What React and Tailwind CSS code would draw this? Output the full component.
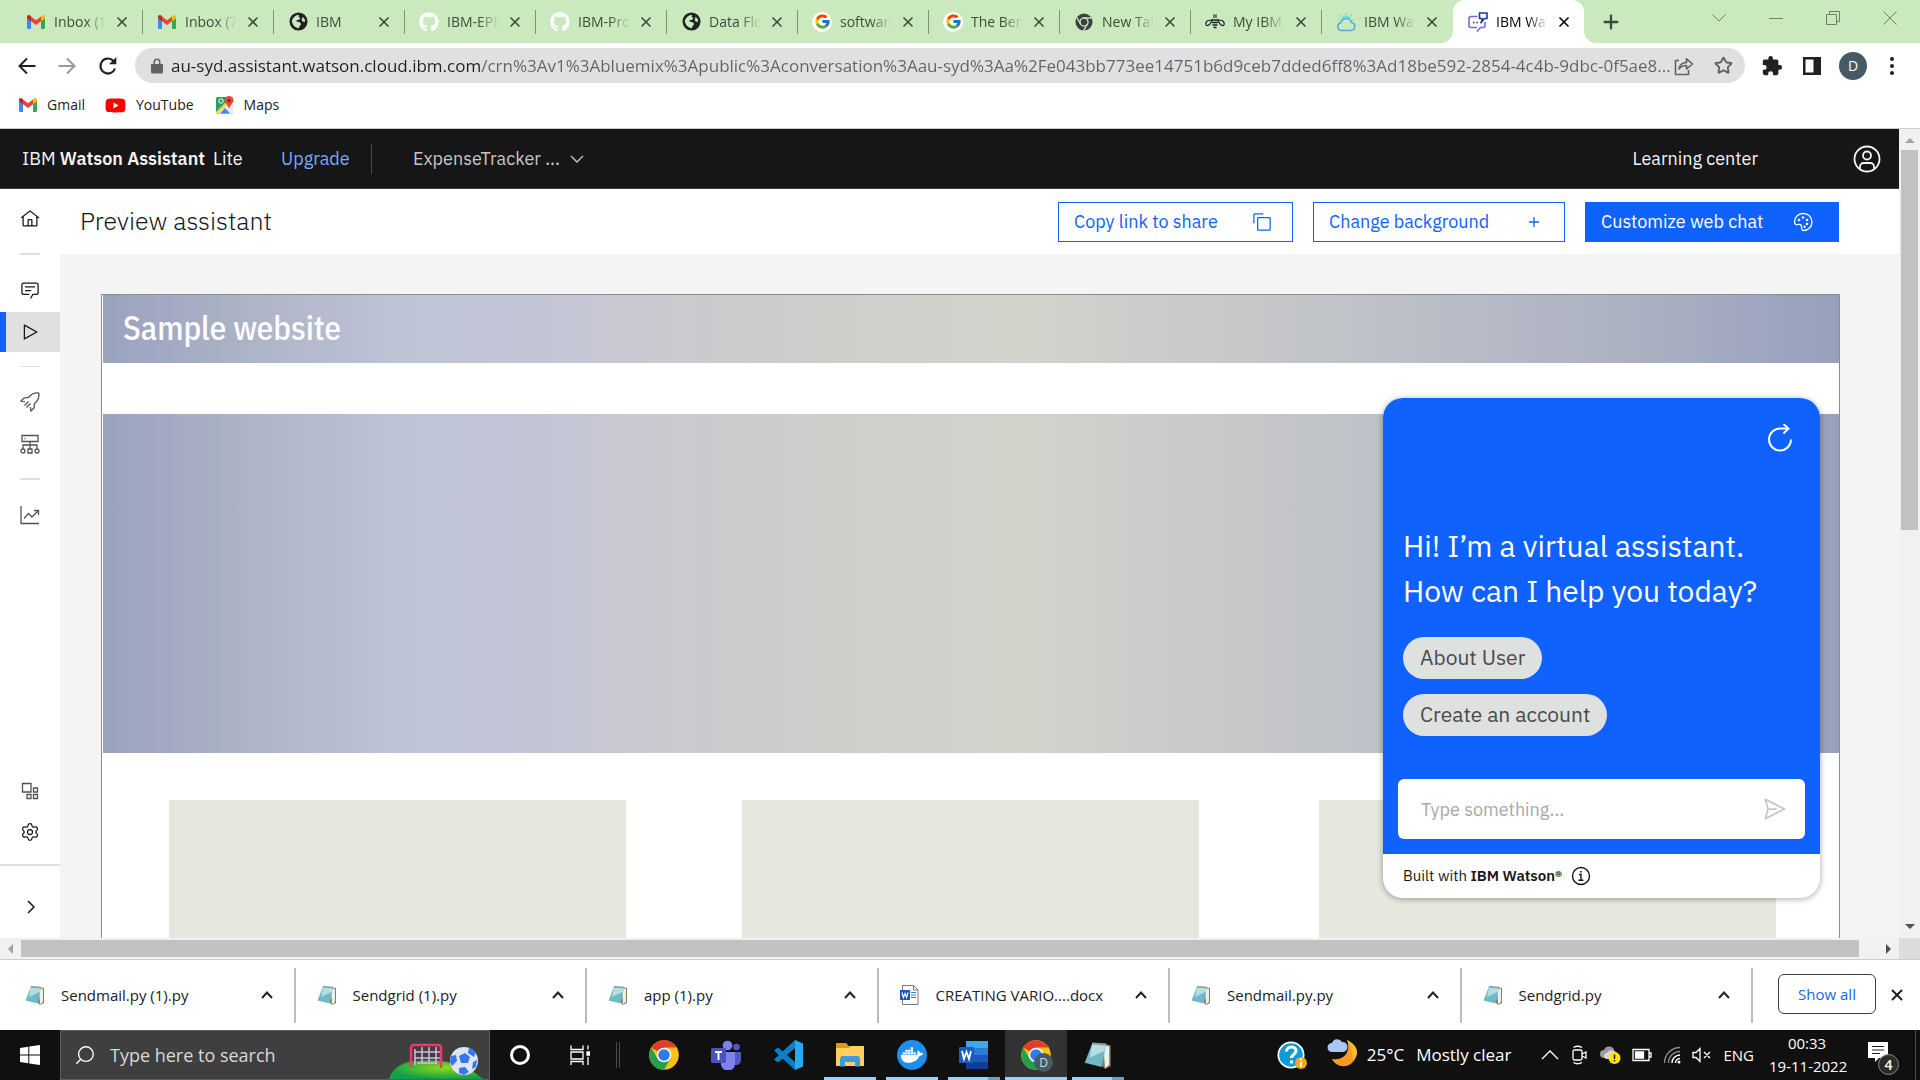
import React from "react";
import { FcGoogle } from "react-icons/fc";
import { FaGithub, FaYoutube, FaDocker } from "react-icons/fa";
import { Settings, X, Plus, Star, Search } from "lucide-react";

const UI = "font-['Segoe_UI','Open_Sans',sans-serif]";
const PLEX = "font-['IBM_Plex_Sans',Roboto,sans-serif]";

function Gmail({ className = "w-[18px] h-[14px]" }) {
  return (
    <svg viewBox="0 0 18 14" className={className} aria-hidden="true">
      <path d="M0 3v9.800a1.200 1.200 0 0 0 1.200 1.200H4V5z" fill="#4285f4" />
      <path d="M14 5v9h2.800a1.200 1.200 0 0 0 1.200-1.200V3z" fill="#34a853" />
      <path d="M14 1.500V6.300l4-3V2c0-1.900-2-2.500-3.200-1.600z" fill="#fbbc04" />
      <path d="M4 6.300V1.400l5 3.800 5-3.800v4.900L9 10z" fill="#ea4335" />
      <path d="M0 2v1.300l4 3V1.400L3.200.4C2-.5 0 .1 0 2z" fill="#c5221f" />
    </svg>
  );
}

function Globe() {
  return (
    <svg viewBox="0 0 20 20" className="size-[19px]" aria-hidden="true">
      <circle cx="10" cy="10" r="9.500" fill="#202124" />
      <path d="M3 9c1.500-3.500 4-5.500 7.500-6-.5 1.500-.5 2.500 1 3 1 .5 0 2-2 2.300C8 8.600 7 9 8 10c2 .5 4.500.5 4.500 2.500 0 1.500-1.500 1.500-2 4.500-4-.2-7-3-7.500-8zM14 5c2 1 3 3 3 5-1.500.6-2.800.2-3.500-1-.6-1.200 1-2 .5-4z" fill="#cbe9bf" />
    </svg>
  );
}

function GoogleBadge() {
  return (
    <span className="flex size-5 items-center justify-center rounded-full bg-white">
      <FcGoogle className="size-[17px]" />
    </span>
  );
}

function ChromeMono() {
  return (
    <svg viewBox="0 0 20 20" className="size-[18px]" aria-hidden="true">
      <circle cx="10" cy="10" r="9.500" fill="#3c4043" />
      <circle cx="10" cy="10" r="4.500" fill="none" stroke="#cbe9bf" strokeWidth="1.500" />
      <path d="M10 5.500h8.500M6.200 12.200L2 5M13.800 12.200L9.600 19.500" stroke="#cbe9bf" strokeWidth="1.500" />
    </svg>
  );
}

function Bee() {
  return (
    <svg viewBox="0 0 20 16" className="w-5 h-4" fill="none" stroke="#202124" strokeWidth="1.200" aria-hidden="true">
      <path d="M8.500.5l1 1.500M11.500.5l-1 1.500M8 3h4" />
      <path d="M6.500 6h7M7 8.500h6M7.500 11h5M8.500 13.500h3" strokeWidth="1.600" />
      <path d="M7 6L3 6.500C.5 8 .3 10 1.500 11.500 3.500 12 5.500 10 7 6zM13 6l4 .5c2.500 1.500 2.700 3.500 1.500 5-2 .5-4-1.500-5.500-5.500z" />
    </svg>
  );
}

function CloudSun() {
  return (
    <svg viewBox="0 0 20 20" className="size-5" fill="none" strokeWidth="1.500" aria-hidden="true">
      <path d="M5.500 18.500h9.500a4 4 0 0 0 .6-7.900A5.500 5.500 0 0 0 5 10.600a4 4 0 0 0 .5 7.900z" stroke="#4fa9d8" />
      <path d="M6 7a4.500 4.500 0 0 1 8.500 1M10 1v1.700M4.500 3l1.200 1.200M15.500 3l-1.200 1.200M2.500 7.500h1.500M16.500 8h1.500" stroke="#5fe0d8" />
    </svg>
  );
}

function WatsonIcon() {
  return (
    <svg viewBox="0 0 20 20" className="size-5" fill="none" strokeWidth="1.600" aria-hidden="true">
      <path d="M9.500 4.500H3A2 2 0 0 0 1 6.500v7a2 2 0 0 0 2 2h6M17 10v3.500a2 2 0 0 1-2 2h-2.500L9 19.500" stroke="#7b61f5" />
      <path d="M11.500 1h7.500v5.500h-2.500L14 9.500v-3h-2.500z" stroke="#1f3a93" />
      <path d="M5 10.500h1.500M8.500 10.500H10M12 10.500h1.500" stroke="#2b2f77" />
    </svg>
  );
}

const tabs = [
  ["Inbox (1)", <Gmail />],
  ["Inbox (7)", <Gmail />],
  ["IBM", <Globe />],
  ["IBM-EPBL", <FaGithub className="size-5 text-white" />],
  ["IBM-Project", <FaGithub className="size-5 text-white" />],
  ["Data Flow", <Globe />],
  ["software", <GoogleBadge />],
  ["The Benefits", <GoogleBadge />],
  ["New Tab", <ChromeMono />],
  ["My IBM", <Bee />],
  ["IBM Watson", <CloudSun />],
];

function Tab({ title, icon, active }) {
  return (
    <div
      className={
        active
          ? "relative flex h-[43px] w-[131px] shrink-0 items-center rounded-t-xl bg-white pl-[15px] text-black before:absolute before:bottom-0 before:-left-3 before:size-3 before:bg-[radial-gradient(circle_at_0_0,transparent_12px,white_12px)] after:absolute after:bottom-0 after:-right-3 after:size-3 after:bg-[radial-gradient(circle_at_100%_0,transparent_12px,white_12px)]"
          : "flex h-6 w-[131px] shrink-0 items-center border-r border-[#7f9277] pl-[14px] text-[#3f4a3b] last:border-transparent"
      }
    >
      <button type="button" className="flex min-w-0 items-center">
        <span className="flex w-5 shrink-0 justify-center">{icon}</span>
        <span className="ml-2 w-[52px] overflow-hidden whitespace-nowrap text-left text-sm [mask-image:linear-gradient(90deg,#000_60%,transparent)]">
          {title}
        </span>
      </button>
      <button type="button" aria-label={"Close " + title} className="ml-2">
        <X className="size-4" strokeWidth={2.5} />
      </button>
    </div>
  );
}

function TabStrip() {
  return (
    <div className="flex h-[43px] items-center bg-[#cbe9bf] pl-3">
      <div className="flex">
        {tabs.map(([t, i], n) => (
          <Tab key={n} title={t} icon={i} />
        ))}
      </div>
      <Tab title="IBM Watson Assistant" icon={<WatsonIcon />} active />
      <button type="button" aria-label="New tab" className="ml-4 text-[#3f4a3b]">
        <Plus className="size-[22px]" strokeWidth={2.5} />
      </button>
      <div className="ml-auto flex h-9 items-center gap-[41px] self-start pr-[22px] text-[#6f7f69]">
        <button type="button" aria-label="Search tabs">
          <svg viewBox="0 0 16 16" className="size-4" fill="none" stroke="currentColor"><path d="M1.500 4.500L8 11l6.500-6.500" /></svg>
        </button>
        <button type="button" aria-label="Minimize">
          <svg viewBox="0 0 16 16" className="size-4" fill="none" stroke="currentColor"><path d="M1 8.500h14" /></svg>
        </button>
        <button type="button" aria-label="Restore">
          <svg viewBox="0 0 16 16" className="size-4" fill="none" stroke="currentColor"><path d="M1.500 4.500h10v10h-10zM4.500 4V1.500h10v10H12" /></svg>
        </button>
        <button type="button" aria-label="Close window">
          <svg viewBox="0 0 16 16" className="size-4" fill="none" stroke="currentColor"><path d="M1.500 1.500l13 13M14.500 1.500l-13 13" /></svg>
        </button>
      </div>
    </div>
  );
}

function Toolbar() {
  return (
    <div className="flex h-[45px] items-center bg-white pl-[18px] pr-5 text-[#202124]">
      <button type="button" aria-label="Back" className="mr-[22px]">
        <svg viewBox="0 0 18 18" className="size-[18px]" fill="none" stroke="currentColor" strokeWidth="2"><path d="M17.500 9H2M9 1.500L1.500 9 9 16.500" /></svg>
      </button>
      <button type="button" aria-label="Forward" className="mr-[22px] text-[#9a9a9a]">
        <svg viewBox="0 0 18 18" className="size-[18px]" fill="none" stroke="currentColor" strokeWidth="2"><path d="M.5 9H16M9 1.500L16.500 9 9 16.500" /></svg>
      </button>
      <button type="button" aria-label="Reload" className="mr-[17px]">
        <svg viewBox="0 0 20 20" className="size-5" fill="none" stroke="currentColor" strokeWidth="2.200"><path d="M17 12.500A7.500 7.500 0 1 1 15.500 5" /><path d="M18.300 1v7.300H11z" fill="currentColor" stroke="none" /></svg>
      </button>
      <form className="flex h-[35px] flex-1 items-center rounded-full bg-[#e0e0e0] pl-4 pr-3 text-[#5f6368]">
        <svg viewBox="0 0 12 16" className="h-4 w-3" aria-hidden="true">
          <path d="M1.500 6H2.500V4a3.500 3.500 0 0 1 7 0v2h1A1.200 1.200 0 0 1 12 7.200v7A1.300 1.300 0 0 1 10.700 15.500H1.300A1.300 1.300 0 0 1 0 14.200v-7A1.200 1.200 0 0 1 1.500 6zM4 6h4V4a2 2 0 0 0-4 0z" fill="currentColor" />
        </svg>
        <input
          aria-label="Address"
          defaultValue="au-syd.assistant.watson.cloud.ibm.com/crn%3Av1%3Abluemix%3Apublic%3Aconversation%3Aau-syd%3Aa%2Fe043bb773ee14751b6d9ceb7dded6ff8%3Ad18be592-2854-4c4b-9dbc-0f5ae8..."
          className="ml-2 min-w-0 flex-1 bg-transparent bg-[linear-gradient(90deg,#202124_311px,#5f6368_311px)] bg-clip-text text-[17px] text-transparent outline-none"
        />
        <button type="button" aria-label="Share">
          <svg viewBox="0 0 20 20" className="size-5" fill="none" stroke="currentColor" strokeWidth="1.600"><path d="M5 4.500H1.500v14h13V14M5 13c.6-4.200 3.200-6.400 7.500-6.500V2.800L18.500 8l-6 5V9.500C9.500 9.500 7 10.500 5 13z" strokeLinejoin="round" /></svg>
        </button>
        <button type="button" aria-label="Bookmark" className="ml-5">
          <Star className="size-[19px]" strokeWidth={2.4} strokeLinejoin="miter" />
        </button>
      </form>
      <button type="button" aria-label="Extensions" className="ml-4">
        <svg viewBox="0 0 24 24" className="size-[22px]" fill="currentColor"><path d="M20.500 11H19V7a2 2 0 0 0-2-2h-4V3.500a2.500 2.500 0 0 0-5 0V5H4a2 2 0 0 0-2 2v3.800h1.500a2.700 2.700 0 0 1 0 5.400H2V20a2 2 0 0 0 2 2h3.800v-1.500a2.700 2.700 0 0 1 5.400 0V22H17a2 2 0 0 0 2-2v-4h1.500a2.500 2.500 0 0 0 0-5z" /></svg>
      </button>
      <button type="button" aria-label="Side panel" className="ml-5">
        <svg viewBox="0 0 18 18" className="size-[18px]"><path d="M0 0h18v18H0z M2.500 2.500v13h8v-13z" fill="currentColor" fillRule="evenodd" /></svg>
      </button>
      <button type="button" aria-label="Profile" className="ml-[18px] flex size-7 items-center justify-center rounded-full bg-[#455a64] text-sm text-white">D</button>
      <button type="button" aria-label="Menu" className="ml-[17px]">
        <svg viewBox="0 0 16 20" className="h-5 w-4" fill="currentColor"><circle cx="8" cy="3" r="2" /><circle cx="8" cy="10" r="2" /><circle cx="8" cy="17" r="2" /></svg>
      </button>
    </div>
  );
}

function Bookmarks() {
  return (
    <nav className="flex h-[41px] items-center border-b border-[#cccccc] bg-white pl-[19px] pb-[6px] text-sm text-[#202124]">
      <a href="#gmail" className="flex items-center gap-[10px]"><Gmail /> Gmail</a>
      <a href="#youtube" className="ml-5 flex items-center gap-[10px]"><FaYoutube className="size-[21px] text-[#f00]" /> YouTube</a>
      <a href="#maps" className="ml-[22px] flex items-center gap-[10px]">
        <svg viewBox="0 0 18 18" className="size-[18px]" aria-hidden="true">
          <rect y="1" width="17" height="16.500" rx="1.500" fill="#1fa463" />
          <path d="M1 17.500L17 2v15.500z" fill="#e8eaed" /><path d="M0 16L14 2l2 2L2.500 17.500H0z" fill="#fcd34d" /><path d="M4 17.500L9 12l5 5.500z" fill="#4285f4" />
          <path d="M13 0a4.500 4.500 0 0 1 4.500 4.500C17.500 7 14 8.500 13 13c-1-4.500-4.500-6-4.500-8.500A4.500 4.500 0 0 1 13 0z" fill="#e8453c" /><circle cx="13" cy="4.500" r="1.500" fill="#8c1d18" />
          <circle cx="5" cy="5" r="2.200" fill="none" stroke="#fff" />
        </svg>
        Maps
      </a>
    </nav>
  );
}

function AppHeader() {
  return (
    <header className="flex h-[60px] shrink-0 items-center border-b border-[#393939] bg-[#161616] pl-[22px] pr-[18px] text-[18px] text-[#f4f4f4]">
      <span className="w-[181px] whitespace-nowrap">IBM <b className="font-semibold">Watson Assistant</b></span>
      <span className="ml-[10px] w-[68px]">Lite</span>
      <a href="#upgrade" className="w-[90px] text-[#78a9ff]">Upgrade</a>
      <span className="h-[30px] w-px bg-[#4a4a4a]" />
      <button type="button" className="ml-[41px] flex items-center gap-[10px] text-[#c6c6c6]">
        ExpenseTracker ...
        <svg viewBox="0 0 14 10" className="h-[10px] w-[14px]" fill="none" stroke="currentColor" strokeWidth="1.400"><path d="M1 2l6 6 6-6" /></svg>
      </button>
      <a href="#learn" className="ml-auto">Learning center</a>
      <button type="button" aria-label="Account" className="ml-[95px]">
        <svg viewBox="0 0 28 28" className="size-7" fill="none" stroke="currentColor" strokeWidth="1.800"><circle cx="14" cy="14" r="12.500" /><circle cx="14" cy="10.500" r="4" /><path d="M7 24v-2.500a3.500 3.500 0 0 1 3.500-3.500h7a3.500 3.500 0 0 1 3.500 3.500V24" /></svg>
      </button>
    </header>
  );
}

function Side({ label, children, className = "h-[42px] text-[#525252]" }) {
  return (
    <button type="button" aria-label={label} className={"flex w-full shrink-0 items-center justify-center " + className}>
      {children}
    </button>
  );
}

function Sidebar() {
  return (
    <nav className="flex w-[60px] shrink-0 flex-col items-center bg-white pt-[9px]">
      <Side label="Home" className="h-[42px] text-[#161616]">
        <svg viewBox="0 0 32 32" className="size-5" fill="currentColor"><path d="M16.612 2.214a1.010 1.010 0 0 0-1.243 0L1 13.419l1.243 1.572L4 13.621V26a2.004 2.004 0 0 0 2 2h20a2.004 2.004 0 0 0 2-2V13.630L29.757 15 31 13.428zM18 26h-4v-8h4zm2 0v-8a2.002 2.002 0 0 0-2-2h-4a2.002 2.002 0 0 0-2 2v8H6V12.062l10-7.790 10 7.800V26z" /></svg>
      </Side>
      <hr className="my-[13px] h-[2px] w-5 border-0 bg-[#e0e0e0]" />
      <Side label="Actions" className="h-11 text-[#161616]">
        <svg viewBox="0 0 32 32" className="size-5" fill="currentColor"><path d="M17.740 30L16 29l4-7h6a2 2 0 0 0 2-2V8a2 2 0 0 0-2-2H6a2 2 0 0 0-2 2v12a2 2 0 0 0 2 2h9v2H6a4 4 0 0 1-4-4V8a4 4 0 0 1 4-4h20a4 4 0 0 1 4 4v12a4 4 0 0 1-4 4h-4.840z" /><path d="M8 10h16v2H8zM8 16h10v2H8z" /></svg>
      </Side>
      <Side label="Preview" className="h-10 border-l-[6px] border-[#0f62fe] bg-[#e0e0e0] pr-[6px] text-[#161616]">
        <svg viewBox="0 0 32 32" className="size-5" fill="currentColor"><path d="M7 28a1 1 0 0 1-1-1V5a1 1 0 0 1 1.482-.876l20 11a1 1 0 0 1 0 1.752l-20 11A1 1 0 0 1 7 28zM8 6.691v18.618L24.925 16z" /></svg>
      </Side>
      <hr className="my-[14px] h-px w-5 border-0 bg-[#e0e0e0]" />
      <Side label="Publish">
        <svg viewBox="0 0 20 20" className="size-5" fill="none" stroke="currentColor" strokeWidth="1.300"><path d="M19 1c-5-.3-8 1-10.500 4.500L4 6 1 9l4 .7M19 1c.3 5-1 8-4.500 10.500L14 16l-3 3-.7-4M8.500 9.500l-4 4M10.500 11.500l-4 4" /></svg>
      </Side>
      <Side label="Environments">
        <svg viewBox="0 0 20 20" className="size-5" fill="none" stroke="currentColor" strokeWidth="1.300"><path d="M2 1.500h16v6H2zM10 7.500V15M3 15v-4h14v4M8 15h4v4H8zM4.500 4.500h1" /><circle cx="3" cy="17" r="2" /><circle cx="17" cy="17" r="2" /></svg>
      </Side>
      <hr className="my-[13px] h-[2px] w-5 border-0 bg-[#e0e0e0]" />
      <Side label="Analyze" className="h-11 text-[#525252]">
        <svg viewBox="0 0 20 20" className="size-5" fill="none" stroke="currentColor" strokeWidth="1.300"><path d="M1 1v17.500h18M4 13.500l4.500-5 3.500 3.500 6.500-6.500M14 5.500h4.500V10" /></svg>
      </Side>
      <div className="mt-auto w-full">
        <Side label="Integrations">
          <svg viewBox="0 0 20 20" className="size-5" fill="none" stroke="currentColor" strokeWidth="1.300"><path d="M2.500 2.500H11V11H2.500zM13.500 7h4v4h-4zM7 13.500h4v4H7zM13.500 13.500h4v4h-4z" /></svg>
        </Side>
        <Side label="Settings" className="h-[40px] text-[#161616]"><Settings className="size-5" strokeWidth={1.5} /></Side>
        <div className="h-3" />
        <Side label="Expand" className="h-[74px] border-t-2 border-[#e0e0e0] pt-[10px] text-[#161616]">
          <svg viewBox="0 0 10 14" className="ml-[2px] h-[14px] w-[10px]" fill="none" stroke="currentColor" strokeWidth="1.500"><path d="M2 1l6 6-6 6" /></svg>
        </Side>
      </div>
    </nav>
  );
}

const GRADIENT =
  "bg-[linear-gradient(90deg,#99a3bd_0%,#a2a8c3_3%,#a9b1c5_7%,#b4b8cd_11%,#bfc4d7_18%,#c2c5d6_25%,#c9c9d1_31%,#cdcdcb_40%,#d2d3cb_53%,#cacaca_62%,#c1c4c8_70%,#b6bac6_80%,#a9aec1_90%,#9ca3bf_97%,#98a1bb_100%)]";

function ChatWidget() {
  return (
    <section aria-label="Web chat" className="absolute top-[209px] right-[79px] w-[437px] overflow-hidden rounded-[20px] bg-white shadow-[0_1px_6px_rgba(0,0,0,0.35)]">
      <div className="flex h-[456px] flex-col bg-[#0f62fe] text-white">
        <button type="button" aria-label="Restart conversation" className="mt-[26px] mr-[26px] self-end">
          <svg viewBox="0 0 28 28" className="size-7" fill="none" stroke="currentColor" strokeWidth="1.900"><path d="M25 15.500a11 11 0 1 1-11-11h8.500M17.500 0l5 4.500-5 5" /></svg>
        </button>
        <p className="mt-[71px] ml-5 text-[30px] leading-[45px]">Hi! I’m a virtual assistant.<br />How can I help you today?</p>
        <div className="mt-6 ml-5 flex flex-col items-start gap-[15px] text-[21px] text-[#4a4a4a]">
          <button type="button" className="h-[42px] rounded-full bg-[#dfe1e1] px-[17px]">About User</button>
          <button type="button" className="h-[42px] rounded-full bg-[#dfe1e1] px-[17px]">Create an account</button>
        </div>
        <form className="mx-[15px] mt-auto mb-[15px] flex h-[60px] items-center rounded-md bg-white pl-[23px] pr-4">
          <input aria-label="Message" placeholder="Type something..." className="min-w-0 flex-1 bg-transparent text-[18px] text-black outline-none placeholder:text-[#a8a8a8]" />
          <button type="button" aria-label="Send" className="text-[#c6c6c6]">
            <svg viewBox="0 0 32 32" className="size-7" fill="currentColor"><path d="M27.450 15.110l-22-11a1 1 0 0 0-1.080.120 1 1 0 0 0-.330 1L7 16 4 26.740A1 1 0 0 0 5 28a1 1 0 0 0 .450-.110l22-11a1 1 0 0 0 0-1.780zm-20.900 10L8.760 17H18v-2H8.760L6.550 6.890 24.760 16z" /></svg>
          </button>
        </form>
      </div>
      <div className="flex h-11 items-center gap-[9px] px-5 text-[15px] text-[#161616]">
        <span>Built with <b className="font-semibold">IBM Watson®</b></span>
        <button type="button" aria-label="About">
          <svg viewBox="0 0 20 20" className="size-5" fill="none" stroke="currentColor" strokeWidth="1.400"><circle cx="10" cy="10" r="8.500" /><path d="M8 8.500h2V14M7.500 14.200h5M9.200 5.800h1.600" /></svg>
        </button>
      </div>
    </section>
  );
}

function Preview() {
  const outline = "flex h-10 items-center justify-between border border-[#0f62fe] pl-[15px] text-[#0f62fe]";
  return (
    <div className="flex min-w-0 flex-1 flex-col">
      <div className="flex h-[65px] shrink-0 items-center gap-5 bg-white pl-5 pr-[60px] text-[18px]">
        <h1 className="mr-auto pb-[2px] text-[25px] font-light text-[#161616]">Preview assistant</h1>
        <button type="button" className={outline + " w-[235px] pr-5"}>
          Copy link to share
          <svg viewBox="0 0 32 32" className="size-5" fill="currentColor"><path d="M28 10v18H10V10h18m0-2H10a2 2 0 0 0-2 2v18a2 2 0 0 0 2 2h18a2 2 0 0 0 2-2V10a2 2 0 0 0-2-2z" /><path d="M4 18H2V4a2 2 0 0 1 2-2h14v2H4z" /></svg>
        </button>
        <button type="button" className={outline + " w-[252px] pr-5"}>
          Change background
          <svg viewBox="0 0 20 20" className="size-5" stroke="currentColor" strokeWidth="1.300"><path d="M10 5v10M5 10h10" /></svg>
        </button>
        <button type="button" className="flex h-10 w-[254px] items-center justify-between bg-[#0f62fe] pl-4 pr-[26px] text-white">
          Customize web chat
          <svg viewBox="0 0 20 20" className="size-5" fill="none" stroke="currentColor" strokeWidth="1.300"><path d="M10.500 1.500A8.500 8.500 0 0 0 1.500 10c0 2.500 2 3 3.500 2.500 2-.6 3.500.3 3.500 2.200 0 2.300.3 3.800 2 3.800A8.500 8.500 0 0 0 10.500 1.500z" /><g fill="currentColor" stroke="none"><circle cx="6" cy="8" r="1.300" /><circle cx="10" cy="5.500" r="1.300" /><circle cx="14" cy="8" r="1.300" /><circle cx="14" cy="12" r="1.300" /><circle cx="11.500" cy="14.800" r="1.200" /></g></svg>
        </button>
      </div>
      <div className="min-h-0 flex-1 overflow-hidden bg-[#f4f4f4] pt-10 pl-[41px] pr-[59px]">
        <div className="h-full border border-b-0 border-[#8d8d8d] bg-white pl-px">
          <div className={"flex h-[68px] items-center pl-5 pb-[2px] font-['IBM_Plex_Sans_Condensed','IBM_Plex_Sans',Roboto,sans-serif] text-[33px] font-medium text-white " + GRADIENT}>Sample website</div>
          <div className="h-[51px]" />
          <div className={"h-[339px] " + GRADIENT} />
          <div className="mt-[47px] flex justify-between pl-[66px] pr-[63px]">
            <div className="h-40 w-[457px] bg-[#e6e7de]" />
            <div className="mr-[5px] h-40 w-[457px] bg-[#e6e7de]" />
            <div className="h-40 w-[457px] bg-[#e6e7de]" />
          </div>
        </div>
      </div>
    </div>
  );
}

function Arrow({ d, dim }) {
  return <svg viewBox="0 0 10 10" className="size-[10px]" aria-hidden="true"><path d={d} fill={dim ? "#a3a3a3" : "#505050"} /></svg>;
}

function Viewport() {
  return (
    <div className="flex min-h-0 flex-1">
      <div className="flex min-w-0 flex-1 flex-col">
        <main className={"relative flex min-h-0 flex-1 flex-col overflow-hidden " + PLEX}>
          <AppHeader />
          <div className="flex min-h-0 flex-1">
            <Sidebar />
            <Preview />
          </div>
          <div className="absolute inset-x-0 top-[60px]"><ChatWidget /></div>
        </main>
        <div className="flex h-[21px] shrink-0 items-center bg-[#f1f1f1] px-[6px]">
          <Arrow d="M7 0v10L2 5z" dim />
          <div className="ml-[5px] mr-6 h-[17px] flex-1 bg-[#c1c1c1]" />
          <Arrow d="M3 0v10l5-5z" />
        </div>
      </div>
      <div className="flex w-[21px] shrink-0 flex-col items-center bg-[#f1f1f1]">
        <div className="flex h-[21px] items-center"><Arrow d="M0 8h10L5 3z" dim /></div>
        <div className="h-[380px] w-[17px] bg-[#c1c1c1]" />
        <div className="mt-auto flex h-[25px] items-center"><Arrow d="M0 3h10L5 8z" /></div>
        <div className="h-[21px] w-full bg-[#dcdcdc]" />
      </div>
    </div>
  );
}

function Notepad({ className = "size-5" }) {
  return (
    <svg viewBox="0 0 20 20" className={className} aria-hidden="true">
      <path d="M14 2l5 1v15l-4 2-3-3z" fill="#8a7a5a" />
      <path d="M14 4l4-.5V17l-3 2.500z" fill="#e8f1f2" />
      <path d="M6 1.500l10 .8-3.500 16.200L.5 15.500z" fill="#6fb9c6" />
      <path d="M6 1.500l10 .8-1 4.500L4 12z" fill="#b5dde2" />
      <path d="M6 1l10 .8v1.500L5.800 2.500z" fill="#8b9a9c" />
    </svg>
  );
}

function WordDoc() {
  return (
    <svg viewBox="0 0 20 20" className="size-5" aria-hidden="true">
      <path d="M2.500.5h11l4.500 4.500v14.500H2.500z" fill="#fff" stroke="#7a7a7a" />
      <path d="M13.500.5V5H18" fill="none" stroke="#7a7a7a" />
      <path d="M11 7.500h5M11 10h5M11 12.500h5" stroke="#2b7cd3" strokeWidth="1.200" />
      <path d="M0 5h10v10H0z" fill="#185abd" />
      <path d="M2 7.500l1.400 5L5 8.500l1.600 4L8 7.500" fill="none" stroke="#fff" strokeWidth="1.200" />
    </svg>
  );
}

const files = ["Sendmail.py (1).py", "Sendgrid (1).py", "app (1).py", "CREATING VARIO....docx", "Sendmail.py.py", "Sendgrid.py"];

function Downloads() {
  return (
    <div className="flex h-[71px] shrink-0 items-center border-t border-[#cccccc] bg-white pl-1 pr-[14px] text-[15px] text-[#202124]">
      <div className="grid flex-1 grid-cols-6">
        {files.map((f) => (
          <div key={f} className="flex h-[55px] items-center border-r-2 border-[#bdbdbd] pl-[21px]">
            <button type="button" className="flex flex-1 items-center gap-4 text-left">
              {f.endsWith("docx") ? <WordDoc /> : <Notepad />}
              {f}
            </button>
            <button type="button" aria-label={"Options for " + f} className="mr-5">
              <svg viewBox="0 0 14 14" className="size-[14px]" fill="none" stroke="currentColor" strokeWidth="2"><path d="M2 10l5-5.500 5 5.500" /></svg>
            </button>
          </div>
        ))}
      </div>
      <button type="button" className="mb-[2px] ml-[25px] h-10 w-[98px] rounded-md border border-[#3c4043] text-[15px] text-[#1a66e8]">Show all</button>
      <button type="button" aria-label="Close downloads" className="ml-3"><X className="size-[18px]" strokeWidth={2.5} /></button>
    </div>
  );
}

function Chrome() {
  return (
    <svg viewBox="0 0 30 30" className="size-[30px]" aria-hidden="true">
      <circle cx="15" cy="15" r="14.800" fill="#fbc116" />
      <path d="M15 15L2.200 7.600A14.800 14.800 0 0 1 27.800 7.600H15z" fill="#e33b2e" />
      <path d="M15 15l-6.400 3.700L2.200 7.600A14.800 14.800 0 0 0 15 29.800l6.400-11.100z" fill="#22a04b" />
      <circle cx="15" cy="15" r="7.300" fill="#fff" /><circle cx="15" cy="15" r="5.800" fill="#3079ee" />
    </svg>
  );
}

function TaskButton({ label, children, bar, active }) {
  return (
    <button type="button" aria-label={label} className={"relative flex h-full w-[62px] shrink-0 items-center justify-center " + (active ? "bg-[#333333]" : "")}>
      {children}
      {bar && (
        <span className={"absolute bottom-0 flex h-[3px] justify-end bg-[#9fd0f5] " + (active ? "inset-x-0" : "inset-x-[5px]")}>
          {bar === "multi" && <span className="w-3 bg-[#6f9fbf]" />}
        </span>
      )}
    </button>
  );
}

function Taskbar() {
  return (
    <footer className="flex h-[50px] shrink-0 items-center bg-[#101010] text-[18px] text-white">
      <button type="button" aria-label="Start" className="flex w-[60px] justify-center">
        <svg viewBox="0 0 20 20" className="size-5" fill="#fff"><path d="M0 3l8.300-1.200v7.700H0zM9.300 1.600L20 0v9.500H9.300zM0 10.500h8.300v7.700L0 17zM9.300 10.500H20V20L9.300 18.400z" /></svg>
      </button>
      <label className="relative flex h-full w-[430px] items-center border border-[#5c5c5c] bg-[#3f3f3f] pl-[13px]">
        <Search className="size-[22px] -scale-x-100" strokeWidth={1.5} />
        <input aria-label="Search" placeholder="Type here to search" className="ml-[14px] w-52 bg-transparent outline-none placeholder:text-[#d8d8d8]" />
        <svg viewBox="0 0 96 36" className="absolute right-1 bottom-0 h-9 w-24" aria-hidden="true">
          <defs><radialGradient id="hill" cx="0.600" cy="0.400" r="0.600"><stop offset="0" stopColor="#8fdc12" /><stop offset="1" stopColor="#0fa04a" /></radialGradient></defs>
          <path d="M0 36C4 24 14 19 26 18c30-3 52 4 68 18z" fill="url(#hill)" />
          <path d="M26 6v16M33 4v16M40 4v16M47 4v17M25 9h26M25 15h26M28 20h20" stroke="#d9b8e8" strokeWidth="1.500" fill="none" />
          <path d="M22 25V5q0-3 3-3h24q3 0 3 3v20" stroke="#f0386b" strokeWidth="2.500" fill="none" />
          <circle cx="75" cy="18" r="14" fill="#dfe3f6" />
          <path d="M70 13l6-3 5 4-2 6h-7zM80 4l7 5-2 5-6-4zM62 13l5-1 1 6-5 5-2-4zM70 25l6-1 4 5-5 3-5-2zM84 19l4-2-1 7-4 2z" fill="#3776f0" />
        </svg>
      </label>
      <button type="button" aria-label="Cortana" className="flex w-[60px] justify-center">
        <svg viewBox="0 0 22 22" className="size-[22px]" fill="none" stroke="#fff" strokeWidth="3"><circle cx="11" cy="11" r="8.500" /></svg>
      </button>
      <button type="button" aria-label="Task view" className="flex w-[60px] justify-center">
        <svg viewBox="0 0 20 20" className="size-5" fill="none" stroke="#fff" strokeWidth="1.300"><path d="M1 .5v4h12v-4M1 7h12v7H1zM1 20v-3.500h12V20M18 .5v4M18 12v8" /><path d="M17 7h2.500v3H17z" fill="#fff" /></svg>
      </button>
      <span className="mx-[6px] h-[26px] w-1 border-x border-[#4a4a4a]" />
      <span className="w-[7px]" />
      <TaskButton label="Chrome"><Chrome /></TaskButton>
      <TaskButton label="Teams">
        <svg viewBox="0 0 30 30" className="size-[30px]"><circle cx="16.500" cy="5.500" r="4.800" fill="#7b83eb" /><circle cx="25.500" cy="7" r="3.300" fill="#5059c9" /><path d="M21 12h9v8a5 5 0 0 1-8 4z" fill="#5059c9" /><path d="M10 12h14v10a7 7 0 0 1-14 3z" fill="#7b83eb" /><rect y="8" width="15" height="15" rx="1.500" fill="#4b53bc" /><path d="M4 12h7M7.500 12v8" stroke="#fff" strokeWidth="1.900" /></svg>
      </TaskButton>
      <TaskButton label="Visual Studio Code">
        <svg viewBox="0 0 30 30" className="size-[30px]"><path d="M22 0v8L5 22.500 1 19.500zM1 10.500l4-3L22 22v8z" fill="#0a7fc9" /><path d="M22 0l8 3.500v23L22 30z" fill="#27a9ef" /></svg>
      </TaskButton>
      <TaskButton label="File Explorer" bar="single">
        <svg viewBox="0 0 28 24" className="h-6 w-7"><path d="M0 0h10l3 3h14v10H0z" fill="#dd9a10" /><path d="M0 5h13l2-2h13v20H0z" fill="#fccf5f" /><path d="M4 23.500V16a3 3 0 0 1 3-3h14a3 3 0 0 1 3 3v7.500h-5V19H9v4.500z" fill="#3e9be0" /></svg>
      </TaskButton>
      <TaskButton label="Docker" bar="single">
        <span className="flex size-[30px] items-center justify-center rounded-full bg-[#1d8eea]"><FaDocker className="size-[22px]" /></span>
      </TaskButton>
      <TaskButton label="Word" bar="multi">
        <svg viewBox="0 0 30 28" className="h-7 w-[30px]"><path d="M7 0h22v7H7z" fill="#41a5ee" /><path d="M7 7h22v7H7z" fill="#2b7cd3" /><path d="M7 14h22v7H7z" fill="#185abd" /><path d="M7 21h22v7H7z" fill="#103f91" /><rect y="6" width="15" height="16" rx="1" fill="#1a5dbe" /><path d="M3 10l2 8 2.500-7 2.500 7 2-8" fill="none" stroke="#fff" strokeWidth="1.800" /></svg>
      </TaskButton>
      <TaskButton label="Chrome profile" bar="single" active>
        <Chrome />
        <span className="absolute right-[14px] bottom-2 flex size-[19px] items-center justify-center rounded-full bg-[#455a64] text-xs text-[#d5dadd]">D</span>
      </TaskButton>
      <TaskButton label="Notepad" bar="multi"><Notepad className="size-7" /></TaskButton>

      <div className="ml-auto flex h-full items-center whitespace-nowrap">
        <button type="button" aria-label="Help">
          <svg viewBox="0 0 30 30" className="size-[30px]"><circle cx="14" cy="15" r="13.500" fill="#fff" /><circle cx="14" cy="15" r="11.800" fill="#0f9ad8" /><path d="M9.500 11.500c0-6 9.500-6 9.500-.5 0 3.500-4.500 3.500-4.500 7M14.500 20.500v3" stroke="#fff" strokeWidth="3" fill="none" /><circle cx="24" cy="23" r="6" fill="#f6a81c" /><path d="M24 22v5M24 18.500v2" stroke="#fff" strokeWidth="2" /></svg>
        </button>
        <button type="button" className="ml-5 flex items-center text-[17px]">
          <svg viewBox="0 0 30 30" className="mr-[10px] mb-1 size-[30px]"><path d="M20 2c12 6 12 20 2 25-7 3-14 0-17-6 13 2 19-8 15-19z" fill="#f59a23" /><path d="M20 2c12 6 12 14 7 20-3-3 0-8-7-20z" fill="#f7b733" /><path d="M5 14a4.500 4.500 0 0 1 0-9 5.500 5.500 0 0 1 10-1 5 5 0 0 1 1 10z" fill="#a9c6f5" /></svg>
          <span>25°C</span><span className="ml-3">Mostly clear</span>
        </button>
        <div className="ml-[30px] flex items-center gap-[11px]">
          <svg viewBox="0 0 18 10" className="h-[10px] w-[18px]" fill="none" stroke="#fff" strokeWidth="1.300"><path d="M1 9l8-8 8 8" /></svg>
          <svg viewBox="0 0 18 20" className="h-5 w-[18px]" fill="none" stroke="#fff" strokeWidth="1.300"><rect x="3" y="5" width="9" height="10" rx="1.500" /><path d="M12 9l4-2v6l-4-2M3.500 2.500q4-2.500 8.500 0M3.500 17.500q4 2.500 8.500 0" /></svg>
          <svg viewBox="0 0 22 20" className="h-5 w-[22px]"><path d="M5 13a4 4 0 0 1 0-8 5.500 5.500 0 0 1 10.500 1A4 4 0 0 1 17 13z" fill="#9b9b9b" /><path d="M8 14a3 3 0 0 1 0-6 5 5 0 0 1 9 0v6z" fill="#d8d8d8" /><circle cx="15.500" cy="13" r="6" fill="#ffe600" /><path d="M15.500 9.500v4.500M15.500 15v1.500" stroke="#222" strokeWidth="1.500" /></svg>
          <svg viewBox="0 0 20 14" className="h-[14px] w-5" fill="none" stroke="#fff" strokeWidth="1.300"><path d="M1 1.500h16v11H1zM17.500 5H19v4h-1.500" /><path d="M3.500 4h8v6h-8z" fill="#fff" /></svg>
          <svg viewBox="0 0 18 18" className="size-[18px]" fill="none" strokeWidth="1.400"><path d="M1.500 17A15.500 15.500 0 0 1 17 1.500M5.500 17A11.500 11.500 0 0 1 17 5.500" stroke="#8d8d8d" /><path d="M9 17a8 8 0 0 1 8-8M12.500 17a4.500 4.500 0 0 1 4.500-4.500" stroke="#fff" /><circle cx="16" cy="16" r="1.500" fill="#fff" /></svg>
          <svg viewBox="0 0 20 16" className="h-4 w-5" fill="none" stroke="#fff" strokeWidth="1.300"><path d="M1 5.500h3l4-4v13l-4-4H1zM12 5l6 6M18 5l-6 6" /></svg>
        </div>
        <span className="ml-[11px] text-[15px]">ENG</span>
        <div className="ml-[15px] w-[76px] text-center text-[15px] leading-[23px]">00:33<br />19-11-2022</div>
        <button type="button" aria-label="Notifications" className="relative ml-[22px] w-[32px]">
          <svg viewBox="0 0 32 32" className="size-8"><path d="M1 3h20v16H12l-4 4v-4H1z" fill="#fff" /><path d="M5 7.500h12M5 11h12M5 14.500h8" stroke="#222" strokeWidth="1.200" /></svg>
          <span className="absolute right-0 -bottom-1 flex size-[21px] items-center justify-center rounded-full border border-[#8a8a8a] bg-[#2b2b2b] text-sm font-semibold">4</span>
        </button>
        <span className="mr-1 ml-4 h-full w-px bg-[#4a4a4a]" />
      </div>
    </footer>
  );
}

export default function App() {
  return (
    <div className={"flex h-screen w-full flex-col overflow-hidden bg-white " + UI}>
      <TabStrip />
      <Toolbar />
      <Bookmarks />
      <Viewport />
      <Downloads />
      <Taskbar />
    </div>
  );
}
